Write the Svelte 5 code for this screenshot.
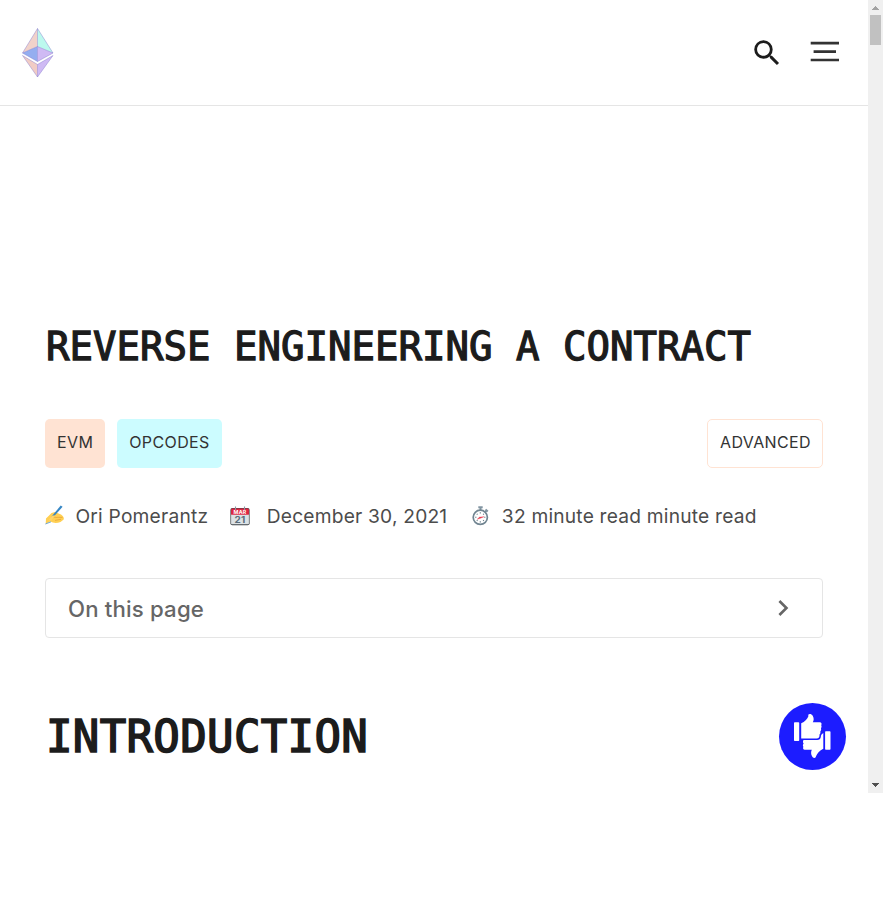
<script>
  const tags = [
    { label: 'EVM', tone: 'peach' },
    { label: 'OPCODES', tone: 'aqua' }
  ];
</script>

<div class="window">
  <div class="page">
    <header>
      <svg class="logo" width="32" height="50" viewBox="0 0 32 50" aria-label="Ethereum">
        <path d="M15.5 0.5V18.5L0.5 25Z" fill="#f1d2ca" />
        <path d="M15.5 0.5V18.5L31 25Z" fill="#bcf9ee" />
        <path d="M15.5 18.5L0.5 25L15.5 33.5Z" fill="#94aef0" />
        <path d="M15.5 18.5L31 25L15.5 33.5Z" fill="#cfbaf4" />
        <path d="M0.5 27.5L15.5 36.5V49Z" fill="#f1ccc5" />
        <path d="M31 27.5L15.5 36.5V49Z" fill="#cfbaf4" />
        <path d="M15.5 0.5L0.5 25L15.5 33.5L31 25ZM15.5 0.5V33.5M0.5 25L15.5 18.5L31 25M0.5 27.5L15.5 36.5L31 27.5L15.5 49ZM15.5 36.5V49" fill="none" stroke="#8178cc" stroke-opacity=".55" stroke-width=".8" />
      </svg>
      <div class="actions">
        <svg class="search" width="34" height="34" viewBox="0 0 24 24" fill="#1c1c1c" aria-label="Search"><path d="M15.5 14h-.79l-.28-.27A6.471 6.471 0 0 0 16 9.5 6.5 6.5 0 1 0 9.5 16c1.61 0 3.09-.59 4.23-1.57l.27.28v.79l5 4.99L20.49 19l-4.99-5zm-6 0C7.01 14 5 11.99 5 9.5S7.01 5 9.5 5 14 7.01 14 9.5 11.99 14 9.5 14z" /></svg>
        <svg class="menu" width="30" height="24" viewBox="0 0 30 24" stroke="#333" stroke-width="2.7" aria-label="Menu"><path d="M.7 3.2H29M3.6 11.6H26M.7 20H29" /></svg>
      </div>
    </header>

    <main>
      <h1>REVERSE ENGINEERING A CONTRACT</h1>
      <div class="tags">
        {#each tags as tag}
          <span class="tag {tag.tone}">{tag.label}</span>
        {/each}
        <span class="tag level">ADVANCED</span>
      </div>
      <div class="meta">
        <svg class="hand" width="20" height="20" viewBox="0 0 20 20">
          <path d="M1 13.5Q4 10.6 6.5 8L10 7.1 16 9.5Q19.5 12 18.7 14.4L15.5 17Q10 19 5.2 16.6L.7 18.7Z" fill="#ffcf52" />
          <path d="M8 12L12 12.5M10 15.4L16 14.3M12 12.3L17.5 12.4" stroke="#e5a33b" stroke-width=".8" fill="none" />
          <path d="M15.7.6L17.6 1.8 8.4 12 6 14.1 7 11Z" fill="#3586c4" />
          <path d="M3.2 15.5L7.5 10.5 10.5 10.6 8 13.2 6 15.5Z" fill="#ffd46b" />
          <path d="M.4 19L6 16.8" stroke="#4b91c5" stroke-width=".8" />
        </svg>
        <span class="author">Ori Pomerantz</span>
        <svg class="calendar" width="20" height="20" viewBox="0 0 20 20">
          <rect x=".4" y="2" width="19.2" height="17.2" rx="2" fill="#3e4347" />
          <path d="M1.1 8H18.9V17.4Q18.9 18.3 18 18.3H2Q1.1 18.3 1.1 17.4Z" fill="#dce2e5" />
          <path d="M1.1 3.5Q1.1 2.5 2.1 2.5H17.9Q18.9 2.5 18.9 3.5V8.7H1.1Z" fill="#df2642" />
          <text x="10" y="7.6" text-anchor="middle" fill="#fff" font-size="4.8" font-weight="700" textLength="13" lengthAdjust="spacingAndGlyphs">MAR</text>
          <text x="10" y="17.2" text-anchor="middle" fill="#596d7b" font-size="9" font-weight="700" textLength="11" lengthAdjust="spacingAndGlyphs">21</text>
          <path d="M5.5.5V4M14.5.5V4" stroke="#8997a2" stroke-width="1.1" />
        </svg>
        <span class="date">December 30, 2021</span>
        <svg class="watch" width="17" height="20" viewBox="0 0 17 20">
          <path d="M6.3 1.3H10.7M8.5 1V5M13.5 3.5L15.8 5.5M14.7 4.5L12.8 6.4" stroke="#8295a2" stroke-width="2" fill="none" />
          <circle cx="8.3" cy="11.3" r="7.1" fill="#fff" stroke="#718591" stroke-width="1.7" />
          <path d="M8.3 6.2V7.4M8.3 15.2V16.4M3.2 11.3H4.4M12.2 11.3H13.4M4.8 7.8L5.5 8.5M11.9 7.8L11.1 8.5M4.8 14.8L5.5 14.1M11.9 14.8L11.1 14.1" stroke="#647985" stroke-width="1.1" />
          <path d="M5.2 13.3L7.5 11.1 12.1 10.7 8.5 12.2Z" fill="#e83a4d" stroke="#e83a4d" stroke-width=".3" />
        </svg>
        <span>32 minute read minute read</span>
      </div>
      <div class="toc">
        <span>On this page</span>
        <svg width="32" height="32" viewBox="0 0 24 24" fill="#666"><path d="M10 6L8.59 7.41 13.17 12l-4.58 4.59L10 18l6-6z" /></svg>
      </div>
      <h2>INTRODUCTION</h2>
    </main>

    <div class="feedback" role="button" tabindex="-1" aria-label="Feedback">
      <svg width="67" height="67" viewBox="0 0 67 67" fill="#fff">
        <rect x="15" y="19.2" width="5.2" height="18.7" rx=".7" />
        <path d="M22.2 20.3C26 19 28 16 29.3 13.5V11.8C29.8 10.5 32.5 10.5 33.7 12.7C35.3 15.8 34.7 17.5 33.8 19.2H40.7C42.6 19.2 43 20.7 42.2 22.2C42.8 23.2 42.6 24.4 42 25.2C42.4 26.5 42.1 27.5 41.3 28.5C41.6 30 41.1 31 40.5 31.6C40.7 34.4 39.8 35.6 37.5 35.6H22.2Z" />
        <path d="M24.5 37.1H38.3C40.4 37 41.5 35.8 41.8 34C42 32 42.3 31.3 44.3 30V45.8C40.5 47.8 38.5 50.3 37 53.2C36.8 55.3 34.5 55.5 33.2 53.4C31.7 51.2 31.9 48.7 32.8 46.7H25.8C24.1 46.5 23.7 45 24.4 43.7C23.6 42.7 23.8 41.4 24.7 40.7C23.7 39.6 23.8 38.3 24.5 37.1Z" />
        <rect x="46.1" y="28.2" width="5.4" height="18.5" rx=".7" />
      </svg>
    </div>
  </div>
  <div class="scrollbar">
    <svg width="15" height="15" viewBox="0 0 15 15"><path d="M7 6H8V7H9V8H10V9H11V10H4V9H5V8H6V7H7Z" fill="#a3a3a3" /></svg>
    <div class="thumb"></div>
    <svg class="down" width="15" height="15" viewBox="0 0 15 15"><path d="M4 5H11V6H10V7H9V8H8V9H7V8H6V7H5V6H4Z" fill="#505050" /></svg>
  </div>
</div>

<style>
  :global(body) { background: #fff; }
  .window { display: flex; width: 883px; height: 793px; font-family: Inter, "Liberation Sans", sans-serif; background: #fff; }
  .page { position: relative; width: 868px; height: 793px; overflow: hidden; }
  header { box-sizing: border-box; height: 106px; padding: 27px 28px 0 22px; display: flex; justify-content: space-between; border-bottom: 1px solid #e5e5e5; }
  .logo { margin-top: 1px; }
  .actions { display: flex; align-items: flex-start; gap: 26px; padding-top: 8px; }
  .search { margin-top: 1px; }
  .menu { margin-top: 5px; }
  main { padding: 211px 45px 0; }
  h1, h2 { margin: 0; color: #1c1c1c; font-family: "DejaVu Sans Mono", "Liberation Mono", monospace; font-weight: 400; white-space: nowrap; -webkit-text-stroke: 1.3px #1c1c1c; }
  h1 { height: 58px; padding-left: 1px; font-size: 39px; line-height: 59px; letter-spacing: .02px; }
  .tags { display: flex; gap: 12px; margin-top: 44px; }
  .tag { box-sizing: border-box; height: 49px; padding: 0 12px; border-radius: 5px; color: #333; font-size: 16px; line-height: 46px; letter-spacing: .38px; white-space: nowrap; }
  .peach { background: #ffe3d3; }
  .aqua { background: #ccfcff; }
  .level { margin-left: auto; padding: 0 11px 0 12px; border: 1px solid #ffe3d3; line-height: 44px; }
  .meta { display: flex; align-items: center; height: 32px; margin-top: 32px; color: #4c4c4c; font-size: 19.2px; line-height: 32px; letter-spacing: .2px; white-space: nowrap; }
  .hand { position: relative; top: -1px; }
  .author { margin-left: 10.5px; }
  .calendar { margin-left: 22px; }
  .date { margin-left: 16.5px; }
  .watch { margin: 0 12.5px 0 25px; }
  .toc { box-sizing: border-box; display: flex; align-items: center; justify-content: space-between; height: 60px; margin-top: 46px; padding: 0 23px 0 22px; border: 1px solid #e5e5e5; border-radius: 4px; color: #666; font-size: 22.2px; font-weight: 500; letter-spacing: .17px; }
  h2 { margin-top: 66px; padding-left: 1px; font-size: 44px; line-height: 65px; letter-spacing: .35px; -webkit-text-stroke-width: 1.6px; }
  .feedback { position: absolute; left: 779px; top: 703px; width: 67px; height: 67px; border-radius: 50%; background: #1c1cff; }
  svg { display: block; flex: none; }
  .scrollbar { display: flex; flex-direction: column; width: 15px; background: #f0f0f0; }
  .thumb { width: 11px; height: 30px; margin-left: 2px; background: #c1c1c1; }
  .down { margin-top: auto; }
</style>
